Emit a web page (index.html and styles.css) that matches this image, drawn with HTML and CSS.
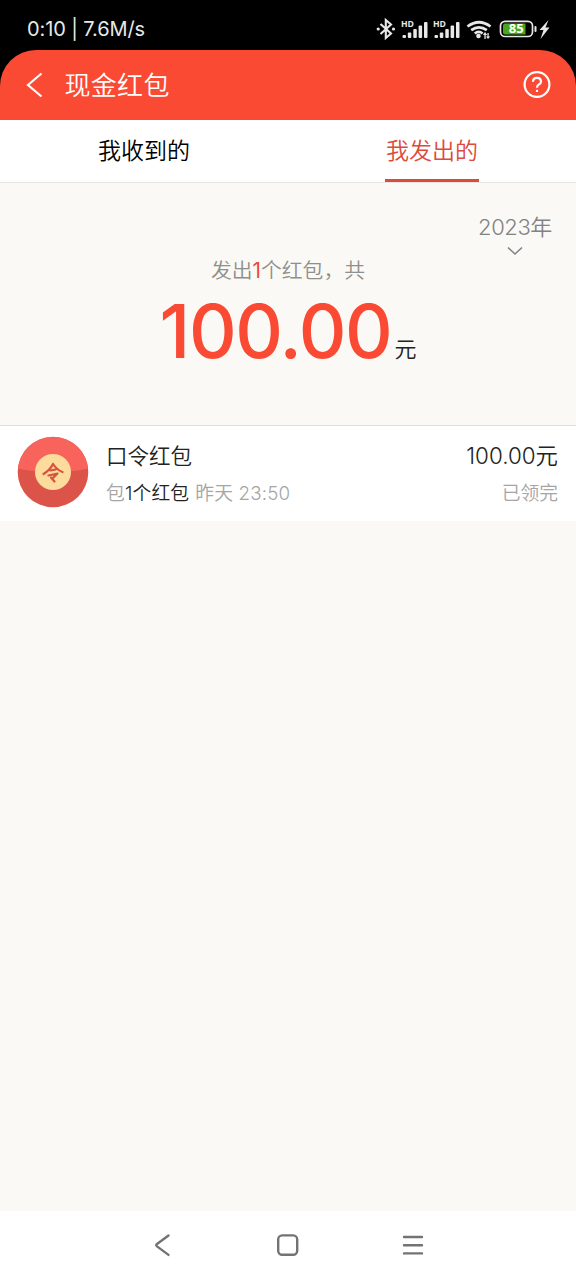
FILE: index.html
```html
<!DOCTYPE html>
<html lang="zh-CN">
<head>
<meta charset="utf-8">
<title>现金红包</title>
<link rel="stylesheet" href="styles.css">
</head>
<body>
<div class="screen">
  <div class="status-bar">
    <span class="status-time">0:10 | 7.6M/s</span>
    <svg class="status-icons" width="176" height="24" viewBox="0 0 176 24">
      <g fill="none" stroke="#e8e8e8" stroke-width="2.100">
        <path d="M4.500 7 15 16.500 9.800 21V3L15 7.500 4.500 17"/>
      </g>
      <g fill="#e8e8e8">
        <circle cx="2.200" cy="12" r="1.600"/><circle cx="17.500" cy="12" r="1.600"/>
        <g id="signal">
          <text class="hd" x="25" y="9.500" textLength="13" lengthAdjust="spacingAndGlyphs">HD</text>
          <rect x="26.500" y="18" width="3.500" height="3" rx="1"/>
          <rect x="31.800" y="15.500" width="3.500" height="5.500" rx="1"/>
          <rect x="37.300" y="12" width="3.500" height="9" rx="1"/>
          <rect x="42.600" y="8.500" width="3.500" height="12.500" rx="1"/>
          <rect x="48" y="5" width="3.500" height="16" rx="1"/>
        </g>
        <use href="#signal" x="32"/>
        <circle cx="102.500" cy="19" r="2.300"/>
        <path d="m109 15 2.200 3h-1.500v4h-1.300v-4h-1.500zM112 22l-2-2.500h1.400V16h1.300v3.500h1.500z"/>
        <path d="M172.500 3 163.500 13h4l-3 9 9-11.500h-4z"/>
        <rect x="158.500" y="9" width="2" height="6" rx="1"/>
      </g>
      <g fill="none" stroke="#e8e8e8" stroke-width="2.700">
        <path d="M91.500 9.500q11.500-8.500 23 0M95.200 13.200q7.800-5.800 15.600 0M98.800 16.500q4-3.200 7.800 0"/>
        <rect x="124.500" y="4.300" width="32" height="15.200" rx="4.500" stroke-width="1.700"/>
      </g>
      <path fill="#48a51c" d="M129 6.500h20.500v11H129q-2 0-2-2v-7q0-2 2-2z"/>
      <text class="charge" x="132.800" y="16.200" textLength="15" lengthAdjust="spacingAndGlyphs">85</text>
    </svg>
  </div>

  <div class="header-wrap">
    <header class="header">
      <svg class="back" width="18" height="28" viewBox="0 0 18 28"><path d="M16.500 2.500 3 14l13.500 11.500"/></svg>
      <h1 class="title">现金红包</h1>
      <svg class="help" width="28" height="28" viewBox="0 0 28 28">
        <circle cx="14" cy="13.500" r="12.400"/>
        <path d="M10 10.800q0-4 4-4t4 3.600q0 2-2.200 3.100Q14 14.500 14 16.800"/>
        <path d="M14 18.800v2.200"/>
      </svg>
    </header>
  </div>

  <nav class="tabs">
    <a class="tab"><span class="tab-label">我收到的</span></a>
    <a class="tab"><span class="tab-label tab-active">我发出的</span></a>
  </nav>

  <section class="summary">
    <div class="year"><span>2023年</span>
      <svg width="16" height="10" viewBox="0 0 16 10"><path d="m1 1.500 7 6.500 7-6.500"/></svg>
    </div>
    <p class="caption">发出<b>1</b>个红包，共</p>
    <p class="total"><span class="amount">100.00</span><span class="unit">元</span></p>
  </section>

  <main class="list">
    <article class="row">
      <svg class="avatar" width="72" height="72" viewBox="0 0 72 72">
        <circle cx="36" cy="36" r="35.300" fill="#dc5449"/>
        <path fill="#f8635c" d="M.9 32.500a35.300 35.300 0 0 1 70.200 0Q36 40 .9 32.500z"/>
        <circle cx="36" cy="36" r="18" fill="#fbdc9c"/>
        <g fill="none" stroke="#d9523f" stroke-width="2.200" stroke-linecap="round" stroke-linejoin="round">
          <path d="M36 28Q33 34 26.500 38M36 28q4 6 9.500 8M33.500 34.500l5-1M31.500 39.500l9-2-4.500 4.500M34 41.500l3.500 4"/>
        </g>
      </svg>
      <div class="info">
        <p class="name">口令红包</p>
        <p class="detail">包<em>1个红包</em><span class="when">昨天 23:50</span></p>
      </div>
      <div class="result">
        <p class="sum">100.00元</p>
        <p class="state">已领完</p>
      </div>
    </article>
  </main>

  <footer class="nav-bar">
    <svg width="24" height="24" viewBox="0 0 24 24"><path d="M17.500 2.500 6 11q-1.500 1.200 0 2.400l11.500 8.500"/></svg>
    <svg width="24" height="24" viewBox="0 0 24 24"><rect x="2.200" y="2.400" width="19" height="19.400" rx="4"/></svg>
    <svg width="24" height="24" viewBox="0 0 24 24"><path d="M3 4h18M3 12.200h18M3 20.400h18"/></svg>
  </footer>
</div>
</body>
</html>
```
FILE: styles.css
```css
* { box-sizing: border-box; }
body, h1, p { margin: 0; }
body {
  font-family: Inter, "Noto Sans CJK SC", sans-serif;
  font-weight: 350;
}
.screen {
  width: 576px;
  height: 1280px;
  display: flex;
  flex-direction: column;
  background: #faf9f5;
}
.status-bar {
  height: 50px;
  padding: 8px 24px 0 27px;
  display: flex;
  align-items: center;
  justify-content: space-between;
  background: #000;
}
.status-time {
  font-size: 20px;
  font-weight: 400;
  line-height: 24px;
  letter-spacing: -.1px;
  color: #e8e8e8;
}
.hd { font: 700 9px "Open Sans", sans-serif; }
.charge { font: 700 12px "Open Sans", sans-serif; fill: #fff; }
.header-wrap { background: #000; }
.header {
  height: 70px;
  padding: 0 25px;
  display: flex;
  align-items: center;
  background: #fa4a34;
  border-radius: 36px 36px 0 0;
}
.back, .help { fill: none; stroke: #fff; stroke-width: 2.200; }
.title {
  margin: 0 auto 0 21.500px;
  padding-top: 1px;
  font-size: 26px;
  line-height: 38px;
  font-weight: 350;
  letter-spacing: .3px;
  color: #fff;
}
.tabs {
  height: 63px;
  display: grid;
  grid-template-columns: 1fr 1fr;
  background: #fff;
  border-bottom: 1px solid #e6e5e2;
}
.tab { display: flex; justify-content: center; }
.tab-label {
  height: 62px;
  padding: 0 1px;
  font-size: 23px;
  line-height: 63px;
  color: #000;
}
.tab-active { color: #dc4b3b; border-bottom: 3px solid #dc4b3b; }
.summary { height: 242px; padding-top: 30px; }
.year {
  width: 74px;
  margin: 0 24px 0 auto;
  display: flex;
  flex-direction: column;
  align-items: center;
  font-size: 22px;
  line-height: 28px;
  white-space: nowrap;
  letter-spacing: -.4px;
  color: #828282;
}
.year svg { margin-top: 5px; fill: none; stroke: #828282; stroke-width: 1.600; }
.caption {
  text-align: center;
  font-size: 20.800px;
  line-height: 30px;
  color: #8f8f8b;
}
.caption b { font-weight: 400; color: #ed4a37; }
.total {
  height: 92px;
  text-align: center;
  line-height: 91px;
}
.amount {
  font-size: 74px;
  font-weight: 550;
  letter-spacing: -1.400px;
  color: #fa4a34;
}
.unit { margin-left: 3px; font-size: 22px; line-height: 30px; vertical-align: 1px; color: #222; }
.list { background: #fff; border-top: 1px solid #dededb; height: 96px; }
.row { display: flex; padding: 11px 18px 0 17px; }
.avatar { margin-top: -1px; }
.info { margin-left: 17px; }
.result { margin-left: auto; text-align: right; }
.name, .sum { font-size: 21.500px; line-height: 38px; color: #222; }
.sum { font-size: 22.400px; }
.detail, .state { font-size: 18.800px; line-height: 38px; color: #a5a5a5; }
.detail { letter-spacing: .15px; }
.detail em { font-style: normal; color: #222; }
.when { margin-left: 6px; }
.nav-bar {
  height: 69px;
  margin-top: auto;
  padding: 0 151px;
  display: flex;
  align-items: center;
  justify-content: space-between;
  background: #fff;
}
.nav-bar svg { margin-top: -1px; fill: none; stroke: #737373; stroke-width: 2.400; stroke-linecap: round; stroke-linejoin: round; }
```
